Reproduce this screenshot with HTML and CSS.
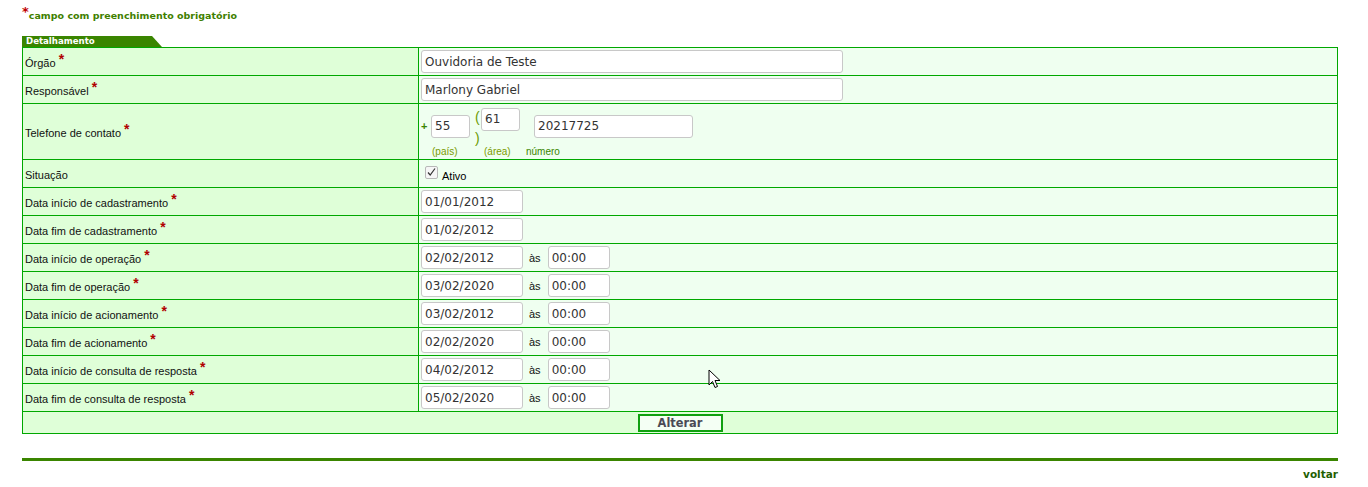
FILE: index.html
```html
<!DOCTYPE html>
<html lang="pt-BR">
<head>
<meta charset="utf-8">
<title>Detalhamento</title>
<link rel="stylesheet" href="styles.css">
</head>
<body>
<div class="page">
  <p class="note"><span class="note-star">*</span>campo com preenchimento obrigatório</p>
  <div class="tab">Detalhamento</div>
  <table class="form">
    <colgroup><col class="c1"><col class="c2"></colgroup>
    <tr><td class="lbl">Órgão <span class="req">*</span></td><td class="val"><input class="in in-wide" value="Ouvidoria de Teste"></td></tr>
    <tr><td class="lbl">Responsável <span class="req">*</span></td><td class="val"><input class="in in-wide" value="Marlony Gabriel"></td></tr>
    <tr class="tall"><td class="lbl">Telefone de contato <span class="req">*</span></td>
      <td class="val">
        <div class="phone">
          <div class="phone-top">
            <span class="plus">+</span>
            <input class="in in-ddi" value="55">
            <span class="area">
              <span class="paren">(</span><input class="in in-ddd" value="61">
              <span class="paren">)</span>
            </span>
            <input class="in in-num" value="20217725">
          </div>
          <div class="phone-labels">
            <span class="pl-pais">(país)</span>
            <span class="pl-area">(área)</span>
            <span class="pl-num">número</span>
          </div>
        </div>
      </td></tr>
    <tr><td class="lbl">Situação</td><td class="val"><span class="check"><span class="box"><svg width="13" height="13" viewBox="0 0 13 13"><path d="M3 6.5 L5.2 9 L10 2.5" fill="none" stroke="#333" stroke-width="1.2"/></svg></span><span class="check-lbl">Ativo</span></span></td></tr>
    <tr><td class="lbl">Data início de cadastramento <span class="req">*</span></td><td class="val"><input class="in in-date" value="01/01/2012"></td></tr>
    <tr><td class="lbl">Data fim de cadastramento <span class="req">*</span></td><td class="val"><input class="in in-date" value="01/02/2012"></td></tr>
    <tr><td class="lbl">Data início de operação <span class="req">*</span></td><td class="val"><input class="in in-date" value="02/02/2012"><span class="as">às</span><input class="in in-time" value="00:00"></td></tr>
    <tr><td class="lbl">Data fim de operação <span class="req">*</span></td><td class="val"><input class="in in-date" value="03/02/2020"><span class="as">às</span><input class="in in-time" value="00:00"></td></tr>
    <tr><td class="lbl">Data início de acionamento <span class="req">*</span></td><td class="val"><input class="in in-date" value="03/02/2012"><span class="as">às</span><input class="in in-time" value="00:00"></td></tr>
    <tr><td class="lbl">Data fim de acionamento <span class="req">*</span></td><td class="val"><input class="in in-date" value="02/02/2020"><span class="as">às</span><input class="in in-time" value="00:00"></td></tr>
    <tr><td class="lbl">Data início de consulta de resposta <span class="req">*</span></td><td class="val"><input class="in in-date" value="04/02/2012"><span class="as">às</span><input class="in in-time" value="00:00"></td></tr>
    <tr><td class="lbl">Data fim de consulta de resposta <span class="req">*</span></td><td class="val"><input class="in in-date" value="05/02/2020"><span class="as">às</span><input class="in in-time" value="00:00"></td></tr>
    <tr class="actions"><td colspan="2"><button class="btn" type="button">Alterar</button></td></tr>
  </table>
  <div class="rule"></div>
  <div class="back"><a href="#" class="back-link">voltar</a></div>
</div>
<svg class="cursor" width="13" height="20" viewBox="0 0 13 20"><path d="M1 1 L1 16 L4.5 12.5 L7 18.5 L9.5 17.5 L7 11.5 L12 11.5 Z" fill="#fff" stroke="#000" stroke-width="1" stroke-linejoin="round"/></svg>
</body>
</html>
```
FILE: styles.css
```css
html, body { margin: 0; padding: 0; background: #fff; }
.page { padding: 0 30px 0 22px; position: relative; }
.note {
  margin: 0;
  padding-top: 10px;
  font: bold 9.5px/12px "DejaVu Sans", sans-serif;
  color: #3f8000;
}
.note-star { color: #c00000; font-size: 13px; vertical-align: 3px; line-height: 0; }
.tab {
  margin-top: 14px;
  width: 136px;
  height: 11px;
  padding-left: 4px;
  background: #3a8500;
  color: #fff;
  font: bold 8.6px/11px "DejaVu Sans", sans-serif;
  clip-path: polygon(0 0, 130px 0, 140px 100%, 0 100%);
}
.form {
  width: 100%;
  border-collapse: collapse;
  font: 11px "Liberation Sans", Arial, sans-serif;
  color: #111;
}
.c1 { width: 396px; }
.form td {
  border: 1px solid #00a800;
  height: 28px;
  padding: 0 2px;
  vertical-align: middle;
  box-sizing: border-box;
}
.form td.lbl { background: #dfffd8; padding-left: 2px; padding-top: 2px; }
.form td.val { background: #effff0; }
.form tr.tall td { height: 56px; }
.req { color: #b00000; font-weight: bold; font-size: 14px; line-height: 0; vertical-align: 3px; }
.in {
  box-sizing: border-box;
  height: 23px;
  border: 1px solid #c8c8c8;
  border-radius: 3px;
  background: #fff;
  padding: 0 3px;
  font: 12px "DejaVu Sans", sans-serif;
  color: #333;
  vertical-align: middle;
  margin: 0;
}
.in-wide { width: 422px; }
.in-date { width: 102px; }
.in-time { width: 62px; }
.in-ddi { width: 39px; }
.in-ddd { width: 39px; }
.in-num { width: 159px; margin-left: 14px; }
.as { display: inline-block; margin: 0 7px 0 6px; vertical-align: middle; }
.phone { display: flex; flex-direction: column; padding-top: 1px; }
.phone-top { display: flex; align-items: center; }
.plus { color: #3a8500; font: bold 11px "Liberation Sans", sans-serif; width: 10px; }
.area {
  display: grid;
  grid-template-columns: 6px auto;
  margin-left: 5px;
  align-items: start;
}
.paren { color: #6a9a00; font: 14px/14px "Liberation Sans", sans-serif; }
.area .paren:first-child { padding-top: 2px; }
.phone-labels { display: flex; font: 10px "Liberation Sans", sans-serif; margin-top: 1px; }
.pl-pais { color: #7a9a00; margin-left: 11px; width: 52px; }
.pl-area { color: #7a9a00; width: 42px; }
.pl-num { color: #3a8500; }
.check { display: inline-flex; align-items: flex-end; margin-left: 4px; }
.box {
  width: 13px; height: 13px; box-sizing: border-box;
  border: 1px solid #b8b8b8; border-radius: 2px; background: #f6f6f6;
  display: inline-flex;
}
.box svg { margin: -1px; }
.check-lbl { margin-left: 4px; position: relative; top: 3px; color: #000; }
.form tr.actions td { background: #dfffd8; text-align: center; height: 22px; padding: 0; }
.btn {
  width: 85px; height: 18px;
  border: 2px solid #10a010;
  background: #f4fff4;
  font: bold 11.4px "DejaVu Sans", sans-serif;
  color: #4a4a55;
  padding: 0;
  margin: 0;
  vertical-align: middle;
}
.rule { margin-top: 24px; height: 3px; background: #3a8500; }
.back { text-align: right; padding-top: 3px; }
.back-link { font: bold 10.5px "DejaVu Sans", sans-serif; color: #1f5e00; text-decoration: none; }
.cursor { position: absolute; left: 708px; top: 369px; }
```
